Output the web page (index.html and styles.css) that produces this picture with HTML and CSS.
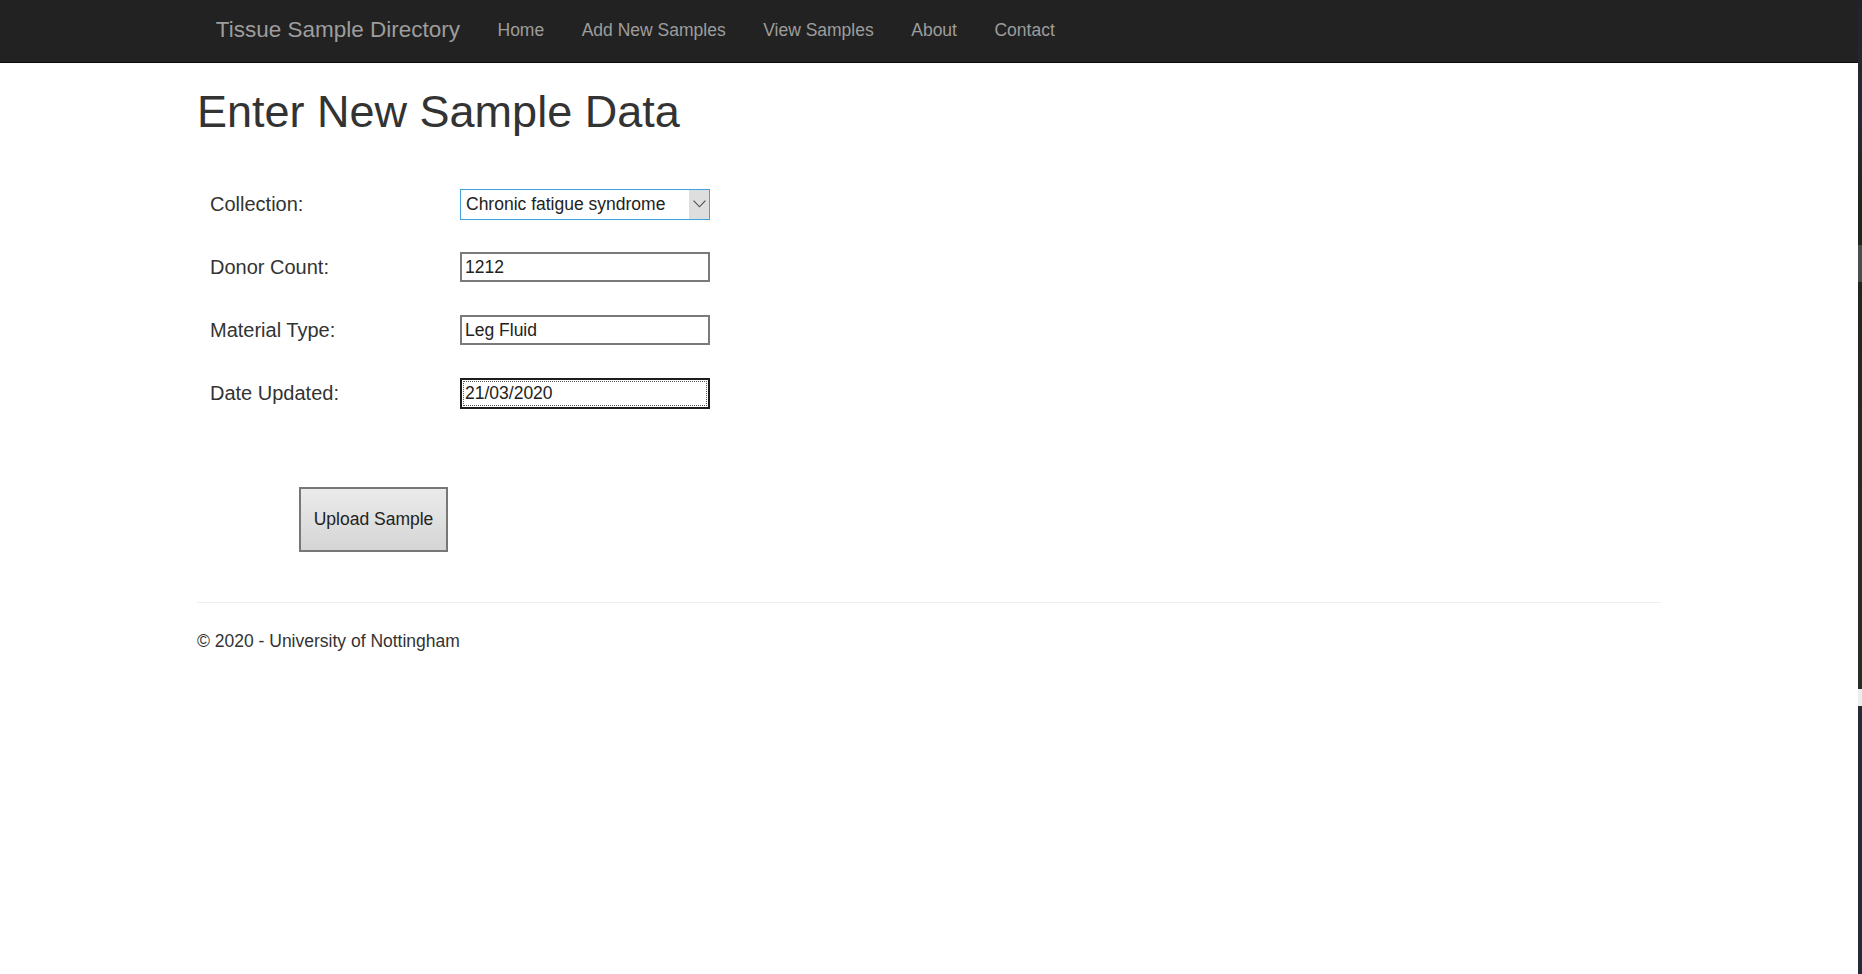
FILE: index.html
```html
<!DOCTYPE html>
<html lang="en">
<head>
<meta charset="utf-8">
<title>Enter New Sample Data - Tissue Sample Directory</title>
<link rel="stylesheet" href="styles.css">
</head>
<body>
<div class="page">
  <nav class="navbar">
    <div class="nav-inner">
      <a class="brand" href="#">Tissue Sample Directory</a>
      <ul class="nav-links">
        <li><a href="#">Home</a></li>
        <li><a href="#">Add New Samples</a></li>
        <li><a href="#">View Samples</a></li>
        <li><a href="#">About</a></li>
        <li><a href="#">Contact</a></li>
      </ul>
    </div>
  </nav>
  <main class="container">
    <h1 class="title">Enter New Sample Data</h1>
    <form class="sample-form">
      <div class="form-grid">
        <label class="field-label">Collection:</label>
        <div class="select-box">
          <span class="select-text">Chronic fatigue syndrome</span>
          <span class="select-arrow">
            <svg width="13" height="8" viewBox="0 0 13 8"><polyline points="0.6,0.6 6.5,6.8 12.4,0.6" fill="none" stroke="#4a4a4a" stroke-width="1.1"/></svg>
          </span>
        </div>
        <label class="field-label">Donor Count:</label>
        <input class="text-input" type="text" value="1212">
        <label class="field-label">Material Type:</label>
        <input class="text-input" type="text" value="Leg Fluid">
        <label class="field-label">Date Updated:</label>
        <div class="text-input date-input"><span class="date-focus">21/03/2020</span></div>
      </div>
      <div class="actions">
        <button type="button" class="upload-btn">Upload Sample</button>
      </div>
    </form>
    <hr class="divider">
    <footer class="footer">© 2020 - University of Nottingham</footer>
  </main>
</div>
<div class="edge-strip"></div>
</body>
</html>
```
FILE: styles.css
```css
html, body {
  margin: 0;
  padding: 0;
  height: 100%;
}
body {
  display: flex;
  font-family: "Liberation Sans", Arial, sans-serif;
  color: #333;
  background: #fff;
  overflow: hidden;
}
.page {
  flex: 1;
  min-width: 0;
  background: #fff;
}
.edge-strip {
  width: 4px;
  flex: none;
  background: linear-gradient(to bottom,
    #22232a 0, #262a35 120px, #24241f 200px, #24241f 245px,
    #4c4c4a 245px, #4c4c4a 282px,
    #24241f 282px, #2c2a22 500px, #2a2a27 689px,
    #ececec 689px, #ececec 706px,
    #262b38 706px, #252a37 974px);
}
.navbar {
  height: 62px;
  background: #222;
  border-bottom: 1px solid #080808;
}
.nav-inner {
  width: 1464px;
  margin: 0 auto;
  display: flex;
  align-items: flex-start;
}
.brand {
  display: block;
  font-size: 22.5px;
  line-height: 25px;
  padding: 16.5px 18.75px 0 18.75px;
  color: #9d9d9d;
  text-decoration: none;
}
.nav-links {
  display: flex;
  list-style: none;
  margin: 0;
  padding: 0;
}
.nav-links a {
  display: block;
  font-size: 17.5px;
  line-height: 25px;
  padding: 18px 18.75px 0 18.75px;
  color: #9d9d9d;
  text-decoration: none;
}
.container {
  width: 1464px;
  margin: 0 auto;
}
.title {
  font-size: 45px;
  font-weight: 500;
  line-height: 49.5px;
  margin: 24px 0 0 0;
  color: #333;
}
.sample-form {
  margin-top: 52px;
  padding-left: 13px;
}
.form-grid {
  display: grid;
  grid-template-columns: 250px 250px;
  grid-auto-rows: 31px;
  row-gap: 32px;
  align-items: center;
}
.field-label {
  font-size: 20px;
  line-height: 31px;
  color: #333;
}
.select-box {
  box-sizing: border-box;
  height: 31px;
  border: 1px solid #44a1e0;
  display: flex;
  align-items: stretch;
  background: #fff;
}
.select-text {
  flex: 1;
  font-size: 17.5px;
  line-height: 29px;
  padding-left: 5px;
  color: #222;
}
.select-arrow {
  width: 20px;
  background: #dedede;
  display: flex;
  align-items: center;
  justify-content: center;
}
.text-input {
  box-sizing: border-box;
  width: 250px;
  height: 30px;
  border: 2px solid #7a7a7a;
  padding: 0 3px;
  font-family: "Liberation Sans", Arial, sans-serif;
  font-size: 17.5px;
  color: #222;
  background: #fff;
  outline: none;
  margin: 0;
}
.date-input {
  height: 31px;
  border-color: #1c1c1c;
  padding: 1px;
  display: flex;
}
.date-focus {
  flex: 1;
  border: 1px dotted #555;
  line-height: 23px;
  padding-left: 1px;
}
.actions {
  margin-top: 78px;
  padding-left: 89px;
}
.upload-btn {
  box-sizing: border-box;
  width: 149px;
  height: 65px;
  border: 2px solid #777;
  background: linear-gradient(to bottom, #ebebeb, #d5d5d5);
  font-family: "Liberation Sans", Arial, sans-serif;
  font-size: 17.5px;
  color: #222;
  padding: 0;
  margin: 0;
  display: block;
}
.divider {
  margin: 50px 0 0 0;
  border: 0;
  border-top: 1px solid #eee;
  height: 0;
}
.footer {
  margin-top: 26px;
  font-size: 17.5px;
  line-height: 25px;
  color: #333;
}
```
